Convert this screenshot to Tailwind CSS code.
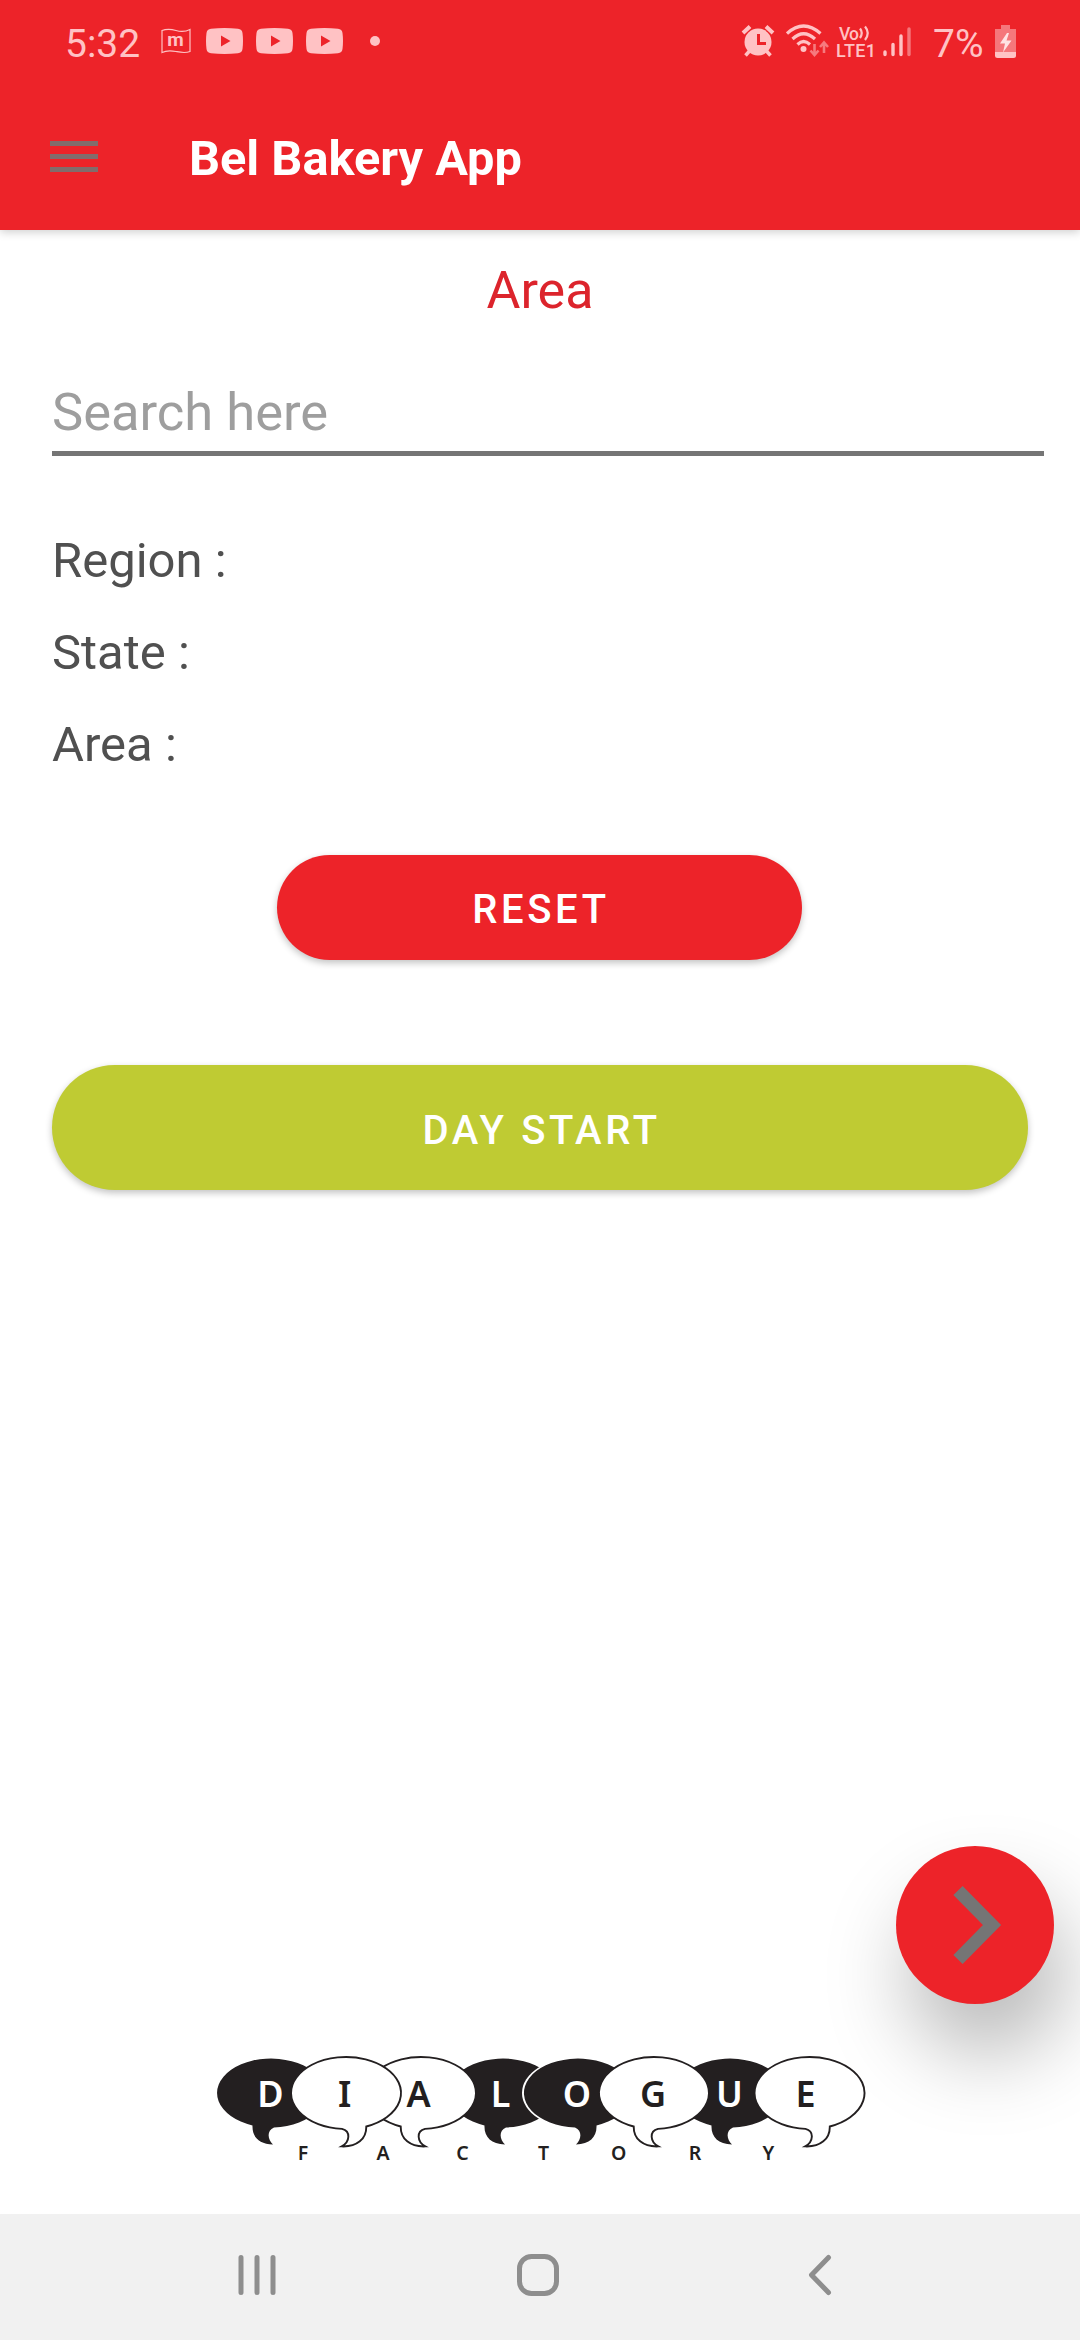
<!DOCTYPE html>
<html lang="en">
<head>
    <meta charset="UTF-8">
    <meta name="viewport" content="width=device-width, initial-scale=1.0">
    <title>Bel Bakery App</title>
    <script src="https://cdn.jsdelivr.net/npm/@tailwindcss/browser@4"></script>
</head>
<body class="bg-white font-[Roboto,sans-serif]">
<div class="relative flex flex-col w-[1080px] h-[2340px] overflow-hidden">
    <header class="h-[230px] shrink-0 bg-[#ed2329] shadow-[0_2px_9px_rgba(0,0,0,0.2)]">
        <!-- Status bar -->
        <div class="flex items-center h-[82px] text-[#ffc2c4]">
            <span class="w-[96px] ml-[65px] pt-[6px] text-[39px] leading-none whitespace-nowrap">5:32</span>
            <svg class="w-[30px] h-[26px]" viewBox="0 0 30 26" fill="none">
                <path d="M1 2.500C6 .5 10 1 15 2.500S24 4 29 1.500V23.500C24 25.500 20 24.500 15 23.500S6 22 1 24.500Z" stroke="currentColor" stroke-width="1.200"/>
                <text x="14.500" y="18" text-anchor="middle" font-family="Roboto" font-weight="700" font-size="19" fill="currentColor">m</text>
            </svg>
            <div class="flex gap-[13px] ml-[15px]">
                <svg class="w-[37px] h-[26px]" viewBox="0 0 37 26"><path d="M5 .8Q18.500-.6 32 .8Q36 1.200 36.500 5Q37.500 13 36.500 21Q36 24.800 32 25.200Q18.500 26.600 5 25.200Q1 24.800.5 21Q-.5 13 .5 5Q1 1.200 5 .8Z" fill="currentColor"/><path d="M15 7.500V18.500L24.500 13Z" fill="#ed2329"/></svg>
                <svg class="w-[37px] h-[26px]" viewBox="0 0 37 26"><path d="M5 .8Q18.500-.6 32 .8Q36 1.200 36.500 5Q37.500 13 36.500 21Q36 24.800 32 25.200Q18.500 26.600 5 25.200Q1 24.800.5 21Q-.5 13 .5 5Q1 1.200 5 .8Z" fill="currentColor"/><path d="M15 7.500V18.500L24.500 13Z" fill="#ed2329"/></svg>
                <svg class="w-[37px] h-[26px]" viewBox="0 0 37 26"><path d="M5 .8Q18.500-.6 32 .8Q36 1.200 36.500 5Q37.500 13 36.500 21Q36 24.800 32 25.200Q18.500 26.600 5 25.200Q1 24.800.5 21Q-.5 13 .5 5Q1 1.200 5 .8Z" fill="currentColor"/><path d="M15 7.500V18.500L24.500 13Z" fill="#ed2329"/></svg>
            </div>
            <span class="w-[10px] h-[10px] ml-[27px] rounded-full bg-[#ffc2c4]"></span>

            <!-- alarm -->
            <svg class="w-[34px] h-[32px] ml-[361px]" viewBox="0 0 34 32">
                <circle cx="17" cy="17" r="13.500" fill="currentColor"/>
                <path d="M2 8L9 1.500M32 8L25 1.500" stroke="currentColor" stroke-width="4"/>
                <path d="M8.500 26L4.500 30.500M25.500 26L29.500 30.500" stroke="currentColor" stroke-width="3.500"/>
                <path d="M17.500 9V18.500H25" fill="none" stroke="#ed2329" stroke-width="3"/>
            </svg>
            <!-- wifi -->
            <svg class="w-[43px] h-[34px] ml-[11px]" viewBox="0 0 43 34" fill="none">
                <g stroke="currentColor" stroke-width="3.200">
                    <path d="M1 9.500Q17.500-5.500 34.500 9.500"/>
                    <path d="M6.500 15Q17.500 4.500 29 15"/>
                    <path d="M11.500 20.500Q17.500 14.500 24 20.500"/>
                </g>
                <circle cx="17.500" cy="25" r="3" fill="currentColor"/>
                <path d="M28.500 20V30M24.500 26.500L28.500 31L32.500 26.500M38 29V19.500M34 23L38 18.500L42 23" stroke="#f67a7e" stroke-width="2.600"/>
            </svg>
            <svg class="w-[44px] h-[40px] ml-[5px]" viewBox="0 0 44 40">
                <g fill="currentColor" font-family="Roboto" font-weight="500">
                    <text x="5" y="19" font-size="17.500" textLength="20">Vo</text>
                    <text x="2" y="35.500" font-size="18" textLength="40">LTE1</text>
                </g>
                <path d="M26 7.500Q29.500 12 26 17M31 5.500Q36.500 12 31 19" fill="none" stroke="currentColor" stroke-width="2.200"/>
            </svg>
            <!-- signal -->
            <svg class="w-[28px] h-[32px] ml-[5px]" viewBox="0 0 28 32" fill="none" stroke="currentColor" stroke-width="3.400" stroke-linecap="round">
                <path d="M2 27V29.500M10 19.500V29.500M18 11V29.500"/>
                <path d="M26 4V29.500" stroke="#f5777b"/>
            </svg>
            <span class="w-[51px] ml-[22px] pt-[6px] text-[39px] leading-none whitespace-nowrap">7%</span>
            <!-- battery -->
            <svg class="w-[21px] h-[33px] ml-[11px]" viewBox="0 0 21 33">
                <path d="M6 0H15V4H21V27H0V4H6Z" fill="#f5777b"/>
                <path d="M0 27H21V30.500Q21 33 18.500 33H2.500Q0 33 0 30.500Z" fill="currentColor"/>
                <path d="M12 8L5 18.500H10L8 27.500L16.500 15.500H11.500L14 8Z" fill="#ffe3e4"/>
            </svg>
        </div>
        <!-- App bar -->
        <div class="flex items-center h-[148px]">
            <div class="flex flex-col gap-[8px] w-[48px] ml-[50px]">
                <span class="h-[5px] bg-[#826c6c]"></span>
                <span class="h-[5px] bg-[#826c6c]"></span>
                <span class="h-[5px] bg-[#826c6c]"></span>
            </div>
            <h1 class="ml-[91px] pt-[6px] text-[48.7px] leading-none font-bold text-white">Bel Bakery App</h1>
        </div>
    </header>

    <main class="flex flex-col grow">
        <h2 class="mt-[25px] h-[71px] text-[52px] leading-[72px] text-center text-[#dc242c]">Area</h2>
        <div class="mt-[47px] ml-[52px] mr-[36px] h-[83px] border-b-[5px] border-[#757575] text-[52.5px] leading-[78px] text-[#9e9e9e]">Search here</div>
        <div class="mt-[59px] ml-[52px] text-[49px] leading-[92px] text-[#505050]">
            <p>Region :</p>
            <p>State :</p>
            <p>Area :</p>
        </div>
        <button class="mt-[64px] ml-[277px] w-[525px] h-[105px] pt-[4px] pl-[3px] rounded-full bg-[#ed2329] text-white text-[40px] leading-none font-medium tracking-[3.6px] shadow-[0_3px_7px_rgba(0,0,0,0.24)]">RESET</button>
        <button class="mt-[105px] ml-[52px] w-[976px] h-[125px] pt-[6px] pl-[3px] rounded-full bg-[#bfcb33] text-white text-[40px] leading-none font-medium tracking-[3.6px] shadow-[0_3px_7px_rgba(0,0,0,0.24)]">DAY START</button>

        <!-- Dialogue Factory logo -->
        <svg class="mt-auto mb-[34px] ml-[200px] w-[680px] h-[140px]" viewBox="200 2040 680 140">
            <defs>
                <path id="white-bubble" d="M-4 35.900A55 36 0 1 1 20.300 33.460C20.500 46 11 54 -4.300 53.400C4 49 5 38 -4 35.900Z" fill="#fff" stroke="#231f20" stroke-width="1.900"/>
                <path id="black-bubble" d="M3 34.450A54 34.500 0 1 0 -18.500 32.400C-19 44 -12 51 2 51.500C-3 47 -5 38 3 34.450Z" fill="#231f20"/>
            </defs>
            <use href="#black-bubble" transform="translate(271 2093)"/>
            <use href="#black-bubble" transform="translate(503 2093)"/>
            <use href="#white-bubble" transform="translate(421 2093) scale(-1 1)"/>
            <use href="#white-bubble" transform="translate(346 2093)"/>
            <ellipse cx="577.500" cy="2093" rx="55.500" ry="35.800" fill="#fff"/>
            <use href="#black-bubble" transform="translate(578 2093) scale(-1 1)"/>
            <use href="#black-bubble" transform="translate(730 2093)"/>
            <use href="#white-bubble" transform="translate(654 2093) scale(-1 1)"/>
            <use href="#white-bubble" transform="translate(809.500 2093)"/>
            <g font-family="Noto Sans, Open Sans, sans-serif" font-weight="600" font-size="36" text-anchor="middle" fill="#231f20">
                <text x="270.500" y="2107" fill="#fff">D</text>
                <text x="344.700" y="2107">I</text>
                <text x="418.500" y="2107">A</text>
                <text x="500.500" y="2107" fill="#fff">L</text>
                <text x="577" y="2107" fill="#fff">O</text>
                <text x="653" y="2107">G</text>
                <text x="729.500" y="2107" fill="#fff">U</text>
                <text x="805.500" y="2107">E</text>
            </g>
            <g font-family="Noto Sans, Open Sans, sans-serif" font-weight="600" font-size="19.500" text-anchor="middle" fill="#231f20">
                <text x="303" y="2160">F</text>
                <text x="383" y="2160">A</text>
                <text x="462.500" y="2160">C</text>
                <text x="543.500" y="2160">T</text>
                <text x="618.700" y="2160">O</text>
                <text x="695" y="2160">R</text>
                <text x="768.500" y="2160">Y</text>
            </g>
        </svg>
    </main>

    <!-- Floating next button -->
    <button class="absolute left-[896px] top-[1846px] w-[158px] h-[158px] rounded-full bg-[#ed2329] shadow-[12px_50px_84px_rgba(0,0,0,0.28)]">
        <svg class="w-[158px] h-[158px]" viewBox="0 0 158 158" fill="none" stroke="#757575" stroke-width="13"><path d="M62 44.500L96 79L62 113.500"/></svg>
    </button>

    <!-- Navigation bar -->
    <nav class="relative flex items-center h-[126px] shrink-0 bg-[#f1f1f1] text-[#8e8e8e]">
        <svg class="w-[40px] h-[44px] ml-[237px] mb-[4px]" viewBox="0 0 40 44" stroke="currentColor" stroke-width="5" stroke-linecap="round"><path d="M4 4.500V39.500M20 4.500V39.500M36 4.500V39.500"/></svg>
        <svg class="w-[42px] h-[42px] ml-[240px] mb-[4px]" viewBox="0 0 42 42" fill="none" stroke="currentColor" stroke-width="5"><rect x="2.500" y="2.500" width="37" height="37" rx="12"/></svg>
        <svg class="w-[26px] h-[44px] ml-[248px] mb-[4px]" viewBox="0 0 26 44" fill="none" stroke="currentColor" stroke-width="5" stroke-linecap="round" stroke-linejoin="round"><path d="M21.500 4.500L4.500 22L21.500 39.500"/></svg>
    </nav>
</div>
</body>
</html>
